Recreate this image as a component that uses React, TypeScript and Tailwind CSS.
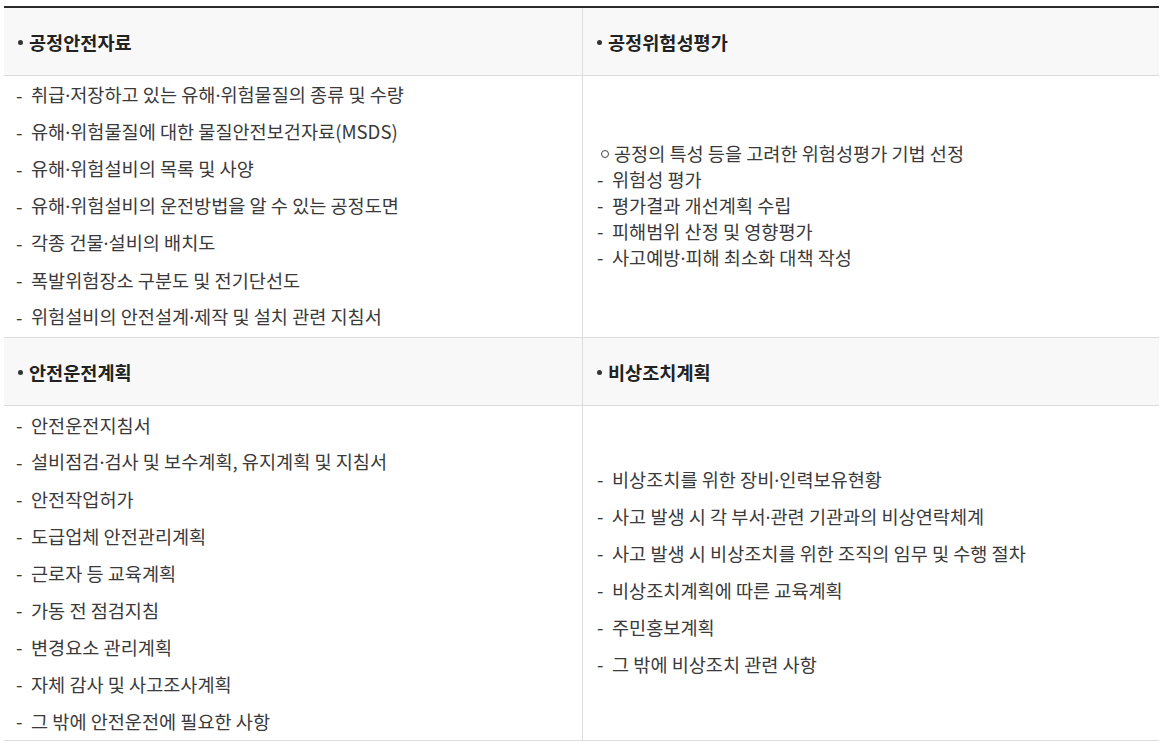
import React from "react";

const font = { fontFamily: '"Noto Sans CJK KR", "Noto Sans", sans-serif' };

function T({ text }: { text: string }) {
  const parts = text.split("·");
  return (
    <>
      {parts.map((p, i) => (
        <React.Fragment key={i}>
          {i > 0 && <span className="font-['Noto_Sans',sans-serif]">·</span>}
          {p}
        </React.Fragment>
      ))}
    </>
  );
}

function Header({ title, left }: { title: string; left?: boolean }) {
  return (
    <div
      className={`h-[68px] bg-[#f8f8f8] border-b border-[#dcdcdc] flex items-center pl-[14px] text-[18.6px] font-bold text-[#222] ${
        left ? "border-r" : ""
      }`}
    >
      <span className="w-[5px] h-[5px] rounded-full bg-[#333] mr-[6px] mt-[2px] shrink-0" />
      <span>{title}</span>
    </div>
  );
}

function DashItem({ text, h }: { text: string; h: string }) {
  return (
    <li className={`flex items-center ${h}`}>
      <span className="w-[15px] shrink-0">-</span>
      <span>
        <T text={text} />
      </span>
    </li>
  );
}

export default function App() {
  const leftTop = [
    "취급·저장하고 있는 유해·위험물질의 종류 및 수량",
    "유해·위험물질에 대한 물질안전보건자료(MSDS)",
    "유해·위험설비의 목록 및 사양",
    "유해·위험설비의 운전방법을 알 수 있는 공정도면",
    "각종 건물·설비의 배치도",
    "폭발위험장소 구분도 및 전기단선도",
    "위험설비의 안전설계·제작 및 설치 관련 지침서",
  ];
  const rightTop = [
    "위험성 평가",
    "평가결과 개선계획 수립",
    "피해범위 산정 및 영향평가",
    "사고예방·피해 최소화 대책 작성",
  ];
  const leftBottom = [
    "안전운전지침서",
    "설비점검·검사 및 보수계획, 유지계획 및 지침서",
    "안전작업허가",
    "도급업체 안전관리계획",
    "근로자 등 교육계획",
    "가동 전 점검지침",
    "변경요소 관리계획",
    "자체 감사 및 사고조사계획",
    "그 밖에 안전운전에 필요한 사항",
  ];
  const rightBottom = [
    "비상조치를 위한 장비·인력보유현황",
    "사고 발생 시 각 부서·관련 기관과의 비상연락체계",
    "사고 발생 시 비상조치를 위한 조직의 임무 및 수행 절차",
    "비상조치계획에 따른 교육계획",
    "주민홍보계획",
    "그 밖에 비상조치 관련 사항",
  ];

  return (
    <div className="bg-white w-[1164px] h-[748px] pt-[6px]" style={font}>
      <div className="ml-[4px] w-[1155px] border-t-2 border-[#2a2a2a] grid grid-cols-[579px_1fr] text-[18.6px] text-[#3a3a3a]">
        <Header title="공정안전자료" left />
        <Header title="공정위험성평가" />

        <div className="border-b border-r border-[#dcdcdc] pl-[12px] pb-[2px]">
          <ul>
            {leftTop.map((t) => (
              <DashItem key={t} text={t} h="h-[37px]" />
            ))}
          </ul>
        </div>
        <div className="border-b border-[#dcdcdc] pl-[14px] pb-[3px] flex flex-col justify-center">
          <div className="flex items-center h-[26px]">
            <span className="w-[8px] h-[8px] rounded-full border border-[#444] ml-[4px] mr-[5px] mt-[2px] shrink-0" />
            <span>공정의 특성 등을 고려한 위험성평가 기법 선정</span>
          </div>
          <ul>
            {rightTop.map((t) => (
              <DashItem key={t} text={t} h="h-[26px]" />
            ))}
          </ul>
        </div>

        <Header title="안전운전계획" left />
        <Header title="비상조치계획" />

        <div className="border-b border-r border-[#dcdcdc] pl-[12px] pb-[1px]">
          <ul>
            {leftBottom.map((t) => (
              <DashItem key={t} text={t} h="h-[37px]" />
            ))}
          </ul>
        </div>
        <div className="border-b border-[#dcdcdc] pl-[14px] pb-[3px] flex flex-col justify-center">
          <ul>
            {rightBottom.map((t) => (
              <DashItem key={t} text={t} h="h-[37px]" />
            ))}
          </ul>
        </div>
      </div>
    </div>
  );
}
